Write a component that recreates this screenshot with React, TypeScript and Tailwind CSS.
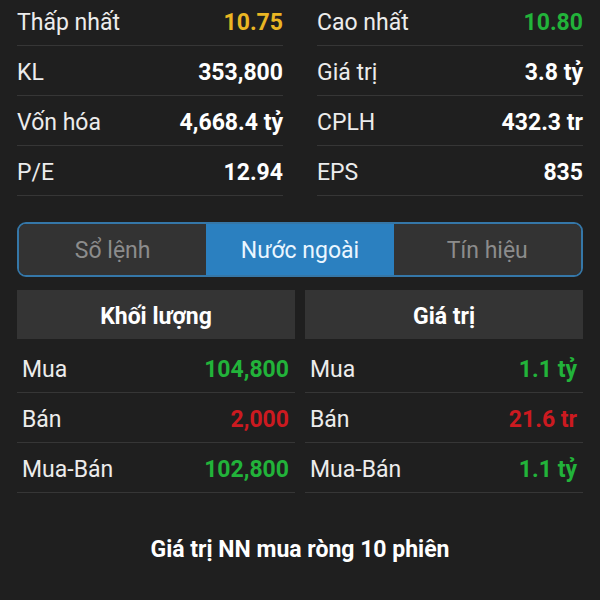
import React, { useState } from 'react'

type Stat = { label: string; value: string; color?: string }

const topStats: Stat[][] = [
  [
    { label: 'Thấp nhất', value: '10.75', color: 'text-[#eab623]' },
    { label: 'Cao nhất', value: '10.80', color: 'text-[#22b33a]' },
  ],
  [
    { label: 'KL', value: '353,800' },
    { label: 'Giá trị', value: '3.8 tỷ' },
  ],
  [
    { label: 'Vốn hóa', value: '4,668.4 tỷ' },
    { label: 'CPLH', value: '432.3 tr' },
  ],
  [
    { label: 'P/E', value: '12.94' },
    { label: 'EPS', value: '835' },
  ],
]

const volumeRows: Stat[] = [
  { label: 'Mua', value: '104,800', color: 'text-[#22b33a]' },
  { label: 'Bán', value: '2,000', color: 'text-[#cc1a20]' },
  { label: 'Mua-Bán', value: '102,800', color: 'text-[#22b33a]' },
]

const valueRows: Stat[] = [
  { label: 'Mua', value: '1.1 tỷ', color: 'text-[#22b33a]' },
  { label: 'Bán', value: '21.6 tr', color: 'text-[#cc1a20]' },
  { label: 'Mua-Bán', value: '1.1 tỷ', color: 'text-[#22b33a]' },
]

const tabs = ['Sổ lệnh', 'Nước ngoài', 'Tín hiệu']

const App: React.FC = () => {
  const [tab, setTab] = useState(1)

  return (
    <div className="w-[600px] h-[600px] overflow-hidden bg-[#1f1f1f] font-['Roboto',sans-serif] text-[23px] text-[#ececec]">
      {/* price summary */}
      <div className="mt-[-4px] px-[17px]">
        {topStats.map((row, i) => (
          <div key={i} className="grid grid-cols-2 gap-x-[34px]">
            {row.map(s => (
              <div
                key={s.label}
                className="h-[50px] flex items-center justify-between pt-[5px] border-b border-[#363636]"
              >
                <span>{s.label}</span>
                <span className={`font-bold ${s.color ?? 'text-white'}`}>{s.value}</span>
              </div>
            ))}
          </div>
        ))}
      </div>

      {/* tabs */}
      <div className="mx-[17px] mt-[26px] h-[55px] grid grid-cols-3 rounded-[9px] border-2 border-[#3577a8] overflow-hidden">
        {tabs.map((t, i) => (
          <button
            key={t}
            onClick={() => setTab(i)}
            className={
              i === tab
                ? 'bg-[#2b80c0] text-[#eaf6ff] text-[23px] pt-[4px]'
                : 'bg-[#333333] text-[#8c8c8c] text-[23px] pt-[4px]'
            }
          >
            {t}
          </button>
        ))}
      </div>

      {/* foreign trading */}
      <div className="mt-[13px] px-[17px] grid grid-cols-2 gap-x-[10px]">
        {[
          { title: 'Khối lượng', rows: volumeRows },
          { title: 'Giá trị', rows: valueRows },
        ].map(col => (
          <div key={col.title}>
            <div className="h-[49px] bg-[#343434] flex items-center justify-center font-bold text-white pt-[5px]">
              {col.title}
            </div>
            <div className="mt-[4px]">
              {col.rows.map(r => (
                <div
                  key={r.label}
                  className="h-[50px] flex items-center justify-between pl-[5px] pr-[6px] pt-[5px] border-b border-[#363636]"
                >
                  <span>{r.label}</span>
                  <span className={`font-bold ${r.color}`}>{r.value}</span>
                </div>
              ))}
            </div>
          </div>
        ))}
      </div>

      <div className="mt-[40px] text-center font-bold text-[23px] text-white">
        Giá trị NN mua ròng 10 phiên
      </div>
    </div>
  )
}

export default App
